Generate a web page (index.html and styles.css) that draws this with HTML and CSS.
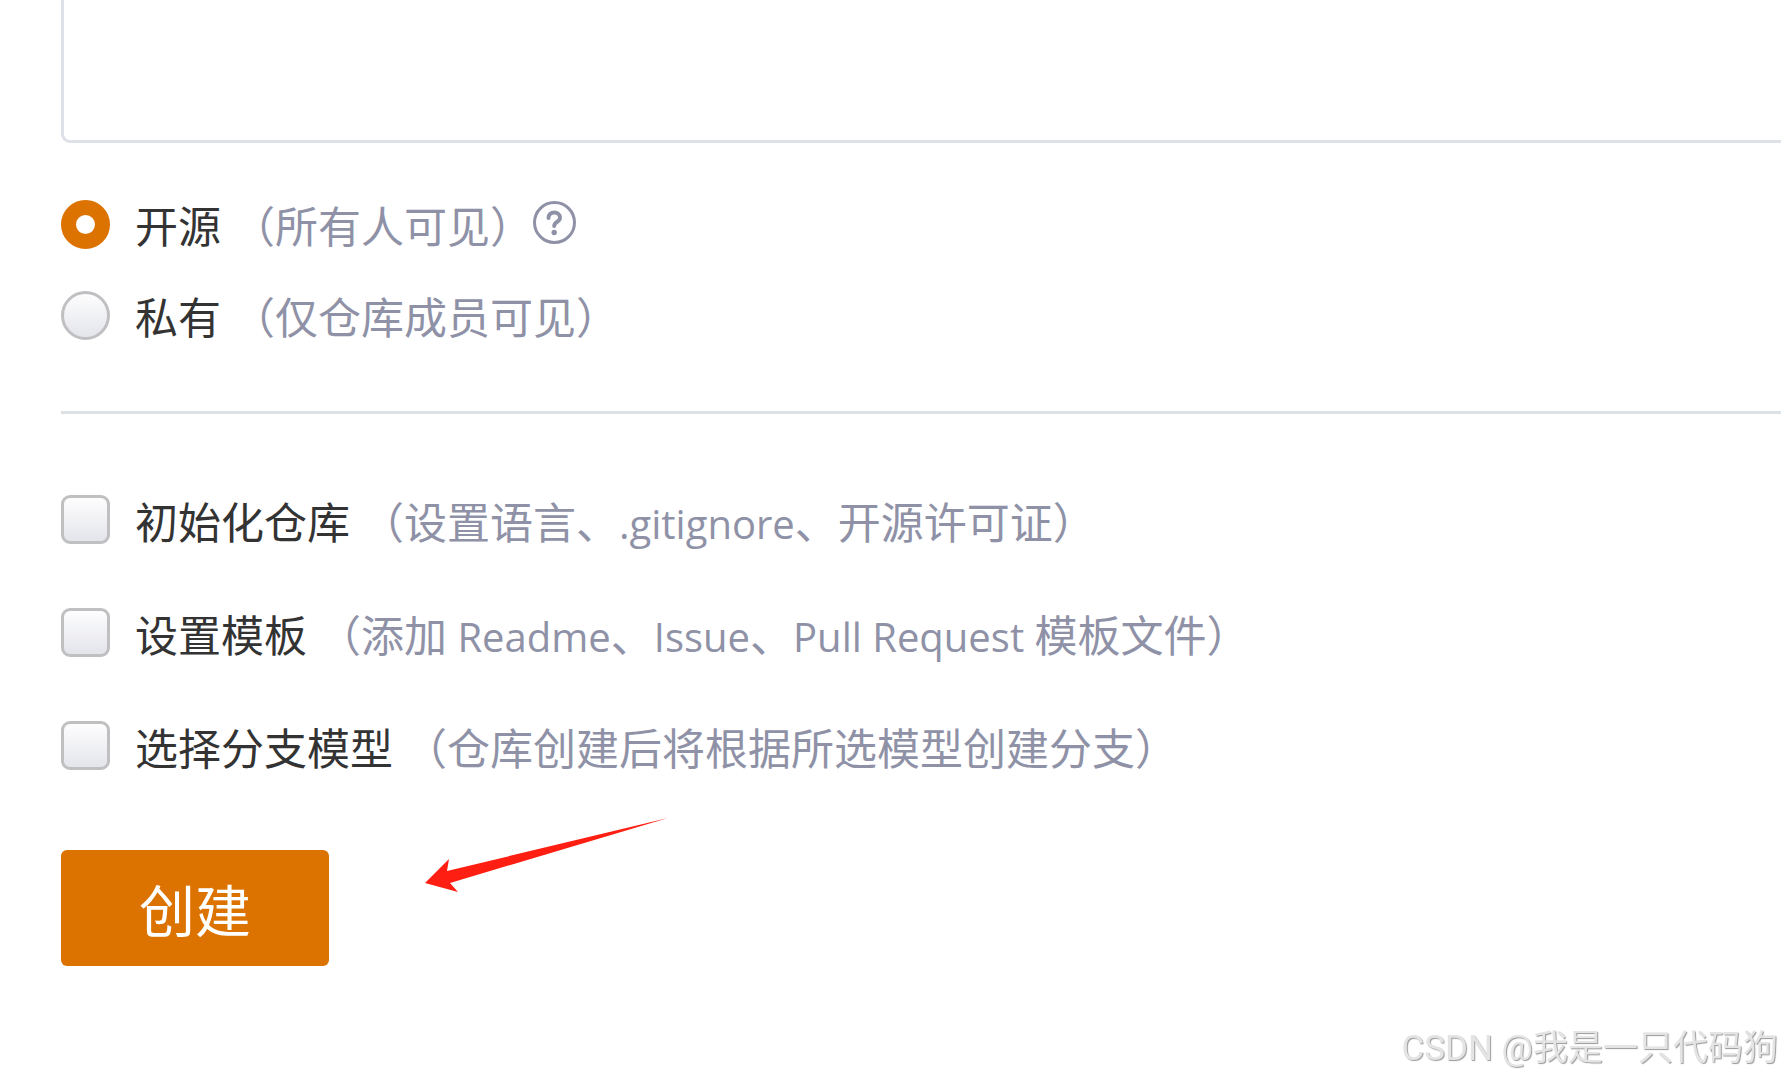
FILE: index.html
```
<!DOCTYPE html>
<html lang="zh-CN">
<head>
    <meta charset="UTF-8">
    <meta name="viewport" content="width=device-width, initial-scale=1.0">
    <title>新建仓库</title>
    <link rel="stylesheet" href="styles.css">
</head>
<body>
    <form class="repo-form">
        <textarea class="intro-box" aria-label="仓库介绍"></textarea>

        <!-- 可见性 -->
        <div class="visibility">
            <div class="option">
                <input type="radio" class="radio" name="visibility" id="public" checked>
                <label for="public">开源<span class="hint">（所有人可见）</span></label>
                <svg class="help-icon" viewBox="0 0 44 44" fill="none" stroke="currentColor" stroke-linecap="round">
                    <circle cx="21.500" cy="22.500" r="20" stroke-width="3"/>
                    <path d="M15.500 18c0-3.300 2.300-5.500 5.700-5.500s5.800 2.200 5.800 5.200c0 4.200-5.800 4.300-5.800 8.300" stroke-width="4"/>
                    <circle cx="21.200" cy="32.500" r="2.700" fill="currentColor" stroke="none"/>
                </svg>
            </div>
            <div class="option">
                <input type="radio" class="radio" name="visibility" id="private">
                <label for="private">私有<span class="hint">（仅仓库成员可见）</span></label>
            </div>
        </div>

        <hr class="divider">

        <!-- 初始化选项 -->
        <div class="settings">
            <div class="option">
                <input type="checkbox" class="checkbox" id="init">
                <label for="init">初始化仓库<span class="hint">（设置语言、<span class="latin">.gitignore</span>、开源许可证）</span></label>
            </div>
            <div class="option">
                <input type="checkbox" class="checkbox" id="template">
                <label for="template">设置模板<span class="hint">（添加<span class="latin"> Readme</span>、<span class="latin">Issue</span>、<span class="latin">Pull Request </span>模板文件）</span></label>
            </div>
            <div class="option">
                <input type="checkbox" class="checkbox" id="branch">
                <label for="branch">选择分支模型<span class="hint">（仓库创建后将根据所选模型创建分支）</span></label>
            </div>
        </div>

        <div class="actions">
            <button type="button" class="create-btn">创建</button>
            <svg class="arrow" viewBox="0 0 244 74">
                <path d="M0 65L24 41L22 53L243 0L25 65L33 74Z" fill="#ff1f12"/>
            </svg>
        </div>
    </form>

    <div class="watermark">CSDN @我是一只代码狗</div>
</body>
</html>
```
FILE: styles.css
```
:root {
    --primary: #dc7200;
    --text: #333;
    --hint: #8f92a7;
}

* {
    box-sizing: border-box;
}

body {
    margin: 0;
    min-height: 100vh;
    background: #fff;
    color: var(--text);
    font-family: "Noto Sans CJK SC", sans-serif;
    font-size: 43px;
    line-height: 49px;
    overflow-x: hidden;
}

.repo-form {
    padding-left: 61px;
}

.intro-box {
    display: block;
    width: 100%;
    height: 143px;
    border: 3px solid #dfe1e9;
    border-width: 0 0 3px 3px;
    border-radius: 0 0 0 9px;
    resize: none;
    outline: none;
}

.visibility {
    display: flex;
    flex-direction: column;
    gap: 42px;
    padding: 57px 0 71px;
}

.option {
    display: flex;
    align-items: flex-start;
    white-space: nowrap;
}

.radio,
.checkbox {
    appearance: none;
    flex: none;
    width: 49px;
    height: 49px;
    margin: 0 25px 0 0;
    border: 3px solid #c0c0c3;
    background: linear-gradient(#fff, #e2e3ea);
    background-origin: border-box;
}

.radio {
    border-radius: 50%;
}

.radio:checked {
    border: 15px solid var(--primary);
    background: #fff;
}

.checkbox {
    border-radius: 9px;
}

.hint {
    margin-left: 11px;
    color: var(--hint);
}

.latin {
    font-family: "Open Sans", sans-serif;
    font-size: 40px;
    line-height: 1;
    white-space: pre;
}

.help-icon {
    width: 44px;
    height: 44px;
    color: var(--hint);
}

.divider {
    margin: 0;
    border: 0;
    border-top: 3px solid #dce1e6;
}

.settings {
    display: flex;
    flex-direction: column;
    gap: 63px;
    padding: 81px 0 79px;
}

.settings label {
    padding-top: 1px;
}

.actions {
    display: flex;
    align-items: flex-start;
    gap: 96px;
}

.create-btn {
    width: 268px;
    height: 116px;
    padding: 0 0 2px;
    border: 0;
    border-radius: 6px;
    background: var(--primary);
    color: #fff;
    font: inherit;
    font-size: 56px;
    cursor: pointer;
}

.arrow {
    width: 244px;
    height: 74px;
    margin-top: -32px;
}

.watermark {
    position: fixed;
    right: 3px;
    bottom: 6px;
    color: #e4e4e4;
    font-family: Roboto, "Noto Sans CJK SC", sans-serif;
    font-size: 35px;
    text-shadow: 1px 1px 1px #999;
}
```
